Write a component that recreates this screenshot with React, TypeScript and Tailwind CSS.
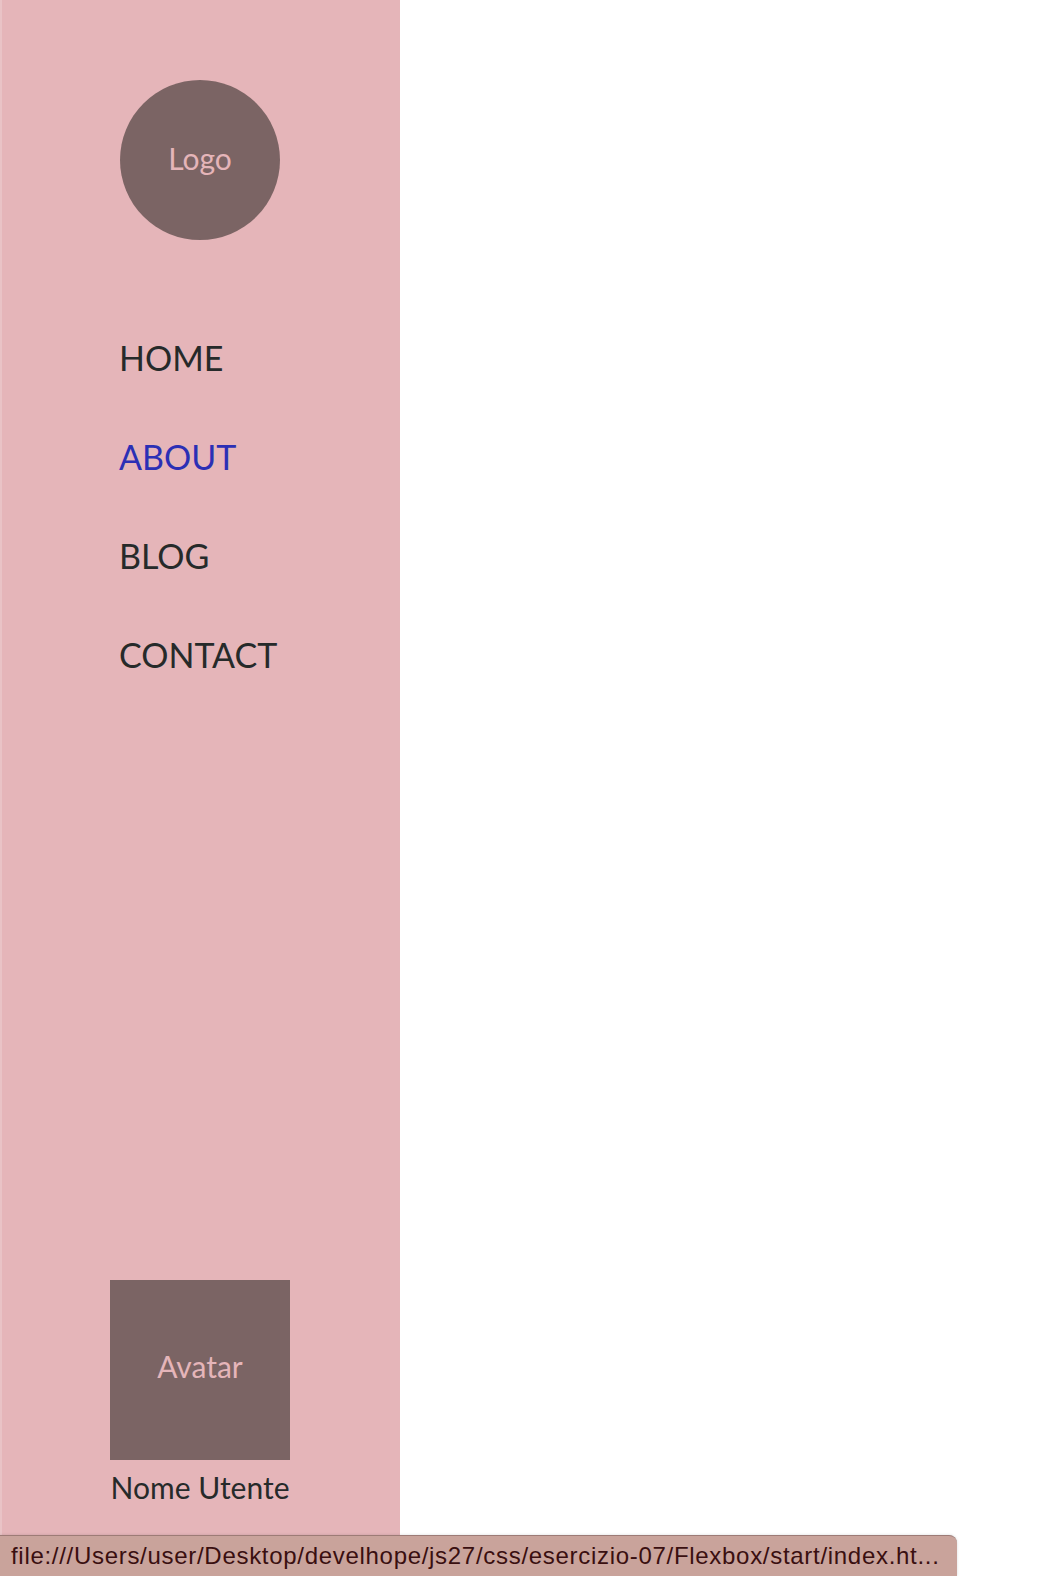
import React from 'react';

const links = ['HOME', 'ABOUT', 'BLOG', 'CONTACT'];

const App: React.FC = () => {
  return (
    <div className="relative w-[1050px] h-[1576px] bg-white overflow-hidden font-['Lato','Open_Sans',sans-serif]">
      {/* Sidebar */}
      <aside className="flex flex-col items-center w-[400px] h-full bg-[#e5b5b9] shadow-[inset_2px_0_0_#e9c3c6]">
        <div className="mt-[80px] flex items-center justify-center w-[160px] h-[160px] rounded-full bg-[#7b6464] text-[#e5b5b9] text-[30px] leading-[36px] pb-[4px]">
          Logo
        </div>

        <nav className="mt-[98px] w-[160px]">
          <ul className="flex flex-col gap-[59px]">
            {links.map((link) => (
              <li key={link}>
                <a
                  href="#"
                  className={`block text-[34px] leading-[40px] -ml-[1px] ${
                    link === 'ABOUT' ? 'text-[#2b2fb5]' : 'text-[#262a2a]'
                  }`}
                >
                  {link}
                </a>
              </li>
            ))}
          </ul>
        </nav>

        <div className="mt-auto mb-[69px] flex flex-col items-center">
          <div className="flex items-center justify-center w-[180px] h-[180px] pb-[8px] bg-[#7b6464] text-[#e5b5b9] text-[30px]">
            Avatar
          </div>
          <span className="mt-[7px] text-[30px] leading-[40px] text-[#262a2a]">Nome Utente</span>
        </div>
      </aside>

      {/* Status bar */}
      <div className="absolute left-0 bottom-0 w-[957px] h-[41px] flex items-center pl-[11px] bg-[#c9a39b] rounded-tr-[8px] border-t border-[#9d7b76] shadow-[0_0_3px_rgba(0,0,0,0.15)] text-[#3a0f10] text-[24px] font-['Liberation_Sans',sans-serif] tracking-[0.7px]">
        file:///Users/user/Desktop/develhope/js27/css/esercizio-07/Flexbox/start/index.ht...
      </div>
    </div>
  );
};

export default App;
